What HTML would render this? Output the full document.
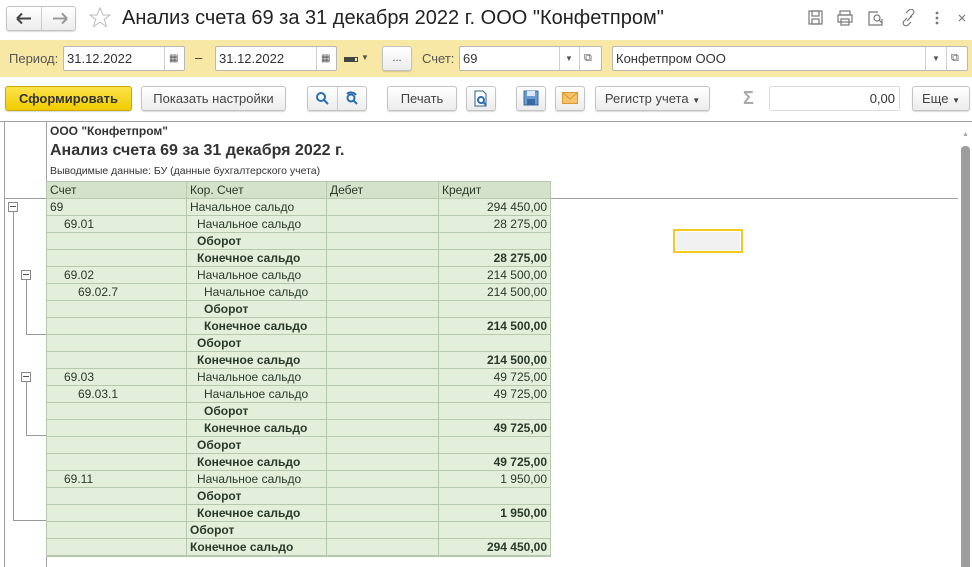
<!DOCTYPE html>
<html><head><meta charset="utf-8"><style>
*{box-sizing:border-box;margin:0;padding:0}
body{width:972px;height:567px;overflow:hidden;background:#fff;font-family:"Liberation Sans",Arial,sans-serif;position:relative;color:#333}
.a{position:absolute}
.btn{position:absolute;border:1px solid #c4c4c4;border-radius:3px;background:linear-gradient(#fff,#ececec);font-size:13px;color:#444;text-align:center;line-height:23px;height:25px;box-shadow:0 1px 1px rgba(0,0,0,.15)}
.inp{position:absolute;background:#fff;border:1px solid #b8b8b8;border-radius:2px;height:25px;font-size:13px;line-height:23px;padding-left:3px;color:#333}
.sep{position:absolute;top:0;bottom:0;width:1px;background:#d0d0d0}
.cell{position:absolute;height:17px;font-size:12px;line-height:17px;color:#2a3a2a;white-space:nowrap}
.b{font-weight:bold}
.r{text-align:right}
.tl{position:absolute;background:#999}
.box{position:absolute;width:10px;height:10px;border:1px solid #888;background:#fff}
.box:after{content:"";position:absolute;left:1px;right:1px;top:3px;height:1px;background:#555}
</style></head><body>
<div class="btn" style="left:6px;top:6px;width:70px;height:25px"></div>
<div class="a" style="left:41px;top:7px;width:1px;height:23px;background:#ccc"></div>
<svg class="a" style="left:15px;top:12px" width="56" height="13"><path d="M2 6.5h14M2 6.5l5-5M2 6.5l5 5" stroke="#444" stroke-width="2" fill="none"/><path d="M38 6.5h14M52 6.5l-5-5M52 6.5l-5 5" stroke="#999" stroke-width="2" fill="none"/></svg>
<svg class="a" style="left:89px;top:7px" width="22" height="22" viewBox="0 0 22 22"><path d="M11 1l3 7h7l-5.7 4.3 2.2 7.2L11 15.2 4.5 19.5l2.2-7.2L1 8h7z" fill="none" stroke="#bbb" stroke-width="1"/></svg>
<div class="a" style="left:122px;top:7px;font-size:20px;color:#222">Анализ счета 69 за 31 декабря 2022 г. ООО "Конфетпром"</div>
<svg class="a" style="left:808px;top:9px" width="160" height="18" viewBox="0 0 160 18" fill="none" stroke="#777" stroke-width="1.2">
<rect x="1" y="2" width="13" height="13"/><rect x="4" y="2" width="7" height="5"/><rect x="4" y="10" width="7" height="5"/>
<rect x="32" y="2" width="10" height="4"/><rect x="30" y="6" width="14" height="7"/><rect x="33" y="10" width="8" height="6"/>
<path d="M70 3h-9v13h13v-6"/><circle cx="69" cy="9" r="3"/><path d="M71 11l3 3"/>
<path d="M99 9l-3 3a2.5 2.5 0 0 0 4 4l3-3M102 8l3-3a2.5 2.5 0 0 0-4-4l-3 3M99 12l5-5"/>
<circle cx="129" cy="4" r=".8" fill="#777"/><circle cx="129" cy="9" r=".8" fill="#777"/><circle cx="129" cy="14" r=".8" fill="#777"/>
<path d="M151 6l6 6M157 6l-6 6"/></svg>
<div class="a" style="left:0;top:40px;width:972px;height:37px;background:#f8e8a6"></div>
<div class="a" style="left:9px;top:51px;font-size:13px;color:#555">Период:</div>
<div class="inp" style="left:63px;top:46px;width:122px">31.12.2022<div class="sep" style="left:100px"></div><span class="a" style="left:105px;top:0;font-size:10px;color:#555">▦</span></div>
<div class="a" style="left:195px;top:50px;font-size:13px">–</div>
<div class="inp" style="left:215px;top:46px;width:122px">31.12.2022<div class="sep" style="left:100px"></div><span class="a" style="left:105px;top:0;font-size:10px;color:#555">▦</span></div>
<div class="a" style="left:344px;top:57px;width:10px;height:5px;background:#444"></div><div class="a" style="left:354px;top:57px;width:4px;height:5px;border:1px solid #444"></div><div class="a" style="left:361px;top:53px;font-size:8px;color:#555">▼</div>
<div class="btn" style="left:382px;top:46px;width:30px;font-size:11px">...</div>
<div class="a" style="left:422px;top:51px;font-size:13px;color:#555">Счет:</div>
<div class="inp" style="left:459px;top:46px;width:143px">69<div class="sep" style="left:99px"></div><div class="sep" style="left:119px"></div><span class="a" style="left:105px;top:0;font-size:8px;color:#555">▼</span><span class="a" style="left:124px;top:0;font-size:11px;color:#555">⧉</span></div>
<div class="inp" style="left:612px;top:46px;width:356px">Конфетпром ООО<div class="sep" style="left:312px"></div><div class="sep" style="left:333px"></div><span class="a" style="left:319px;top:0;font-size:8px;color:#555">▼</span><span class="a" style="left:338px;top:0;font-size:11px;color:#555">⧉</span></div>
<div class="btn" style="left:5px;top:86px;width:127px;background:linear-gradient(#fbe34a,#f0cc00);border-color:#c9a800;font-weight:bold;color:#333">Сформировать</div>
<div class="btn" style="left:141px;top:86px;width:145px">Показать настройки</div>
<div class="btn" style="left:307px;top:86px;width:60px"></div><div class="a" style="left:337px;top:87px;width:1px;height:23px;background:#ccc"></div>
<svg class="a" style="left:314px;top:91px" width="48" height="16" fill="none" stroke="#2b6fb0" stroke-width="2"><circle cx="7" cy="6" r="4"/><path d="M10 9l4 4"/><circle cx="37" cy="7" r="3.5"/><path d="M40 10l3 3M33 3a6 6 0 0 1 9 1"/></svg>
<div class="btn" style="left:387px;top:86px;width:70px">Печать</div>
<div class="btn" style="left:466px;top:86px;width:30px"></div>
<svg class="a" style="left:473px;top:90px" width="16" height="17"><path d="M2 1h8l3 3v12H2z" fill="#fff" stroke="#2b5f90"/><circle cx="8" cy="10" r="3" fill="none" stroke="#2b6fb0" stroke-width="2"/><path d="M10 12l3 3" stroke="#2b6fb0" stroke-width="2"/></svg>
<div class="btn" style="left:516px;top:86px;width:30px"></div>
<svg class="a" style="left:523px;top:90px" width="16" height="16"><rect x="1" y="1" width="14" height="14" fill="#6b9bd1" stroke="#3a6aa0"/><rect x="4" y="1" width="8" height="5" fill="#dde9f7"/><rect x="4" y="9" width="8" height="6" fill="#3a6aa0"/></svg>
<div class="btn" style="left:555px;top:86px;width:30px"></div>
<svg class="a" style="left:562px;top:92px" width="16" height="12"><rect x=".5" y=".5" width="15" height="11" fill="#f3c26a" stroke="#d99a30"/><path d="M1 1l7 6 7-6" fill="none" stroke="#d99a30"/></svg>
<div class="btn" style="left:595px;top:86px;width:115px">Регистр учета <span style="font-size:8px">▼</span></div>
<div class="a" style="left:743px;top:88px;font-size:18px;color:#aaa;font-weight:bold">Σ</div>
<div class="inp" style="left:769px;top:86px;width:131px;text-align:right;padding-right:4px;border-color:#ddd">0,00</div>
<div class="btn" style="left:912px;top:86px;width:58px">Еще <span style="font-size:8px">▼</span></div>
<div class="a" style="left:0;top:121px;width:972px;height:1px;background:#a0a0a0"></div>
<div class="a" style="left:4px;top:122px;width:1px;height:445px;background:#a0a0a0"></div>
<div class="a" style="left:46px;top:122px;width:1px;height:445px;background:#a0a0a0"></div>
<div class="a" style="left:4px;top:198px;width:954px;height:1px;background:#a0a0a0"></div>
<div class="a" style="left:961px;top:146px;width:9px;height:421px;background:#9e9e9e;border-radius:4px 4px 0 0"></div>
<div class="a" style="left:962px;top:131px;font-size:7px;color:#aaa">▲</div>
<div class="a" style="left:673px;top:229px;width:70px;height:24px;border:2px solid #f5c81e;background:#f1f1f1;box-shadow:inset 0 0 0 1px #fff"></div>
<div class="a" style="left:50px;top:124px;font-size:12px;font-weight:bold;color:#333">ООО "Конфетпром"</div>
<div class="a" style="left:50px;top:142px;font-size:16px;font-weight:bold;color:#333">Анализ счета 69 за 31 декабря 2022 г.</div>
<div class="a" style="left:50px;top:165px;font-size:10.5px;color:#333">Выводимые данные: БУ (данные бухгалтерского учета)</div>
<div class="a" style="left:46px;top:181px;width:505px;height:18px;background:#d5e2cb;border:1px solid #b5c9ac"></div>
<div class="a" style="left:46px;top:199px;width:505px;height:358px;background:#e3eedb;border:1px solid #b5c9ac;border-top:none"></div>
<div id="grid"></div>
<div class="cell" style="left:50px;top:182px">Счет</div>
<div class="cell" style="left:190px;top:182px">Кор. Счет</div>
<div class="cell" style="left:330px;top:182px">Дебет</div>
<div class="cell" style="left:442px;top:182px">Кредит</div>
<div class="tl" style="left:13px;top:212px;width:1px;height:309px"></div><div class="tl" style="left:13px;top:520px;width:33px;height:1px"></div>
<div class="tl" style="left:26px;top:280px;width:1px;height:55px"></div><div class="tl" style="left:26px;top:334px;width:20px;height:1px"></div>
<div class="tl" style="left:26px;top:382px;width:1px;height:54px"></div><div class="tl" style="left:26px;top:435px;width:20px;height:1px"></div>
<div class="box" style="left:8px;top:202px"></div>
<div class="box" style="left:21px;top:270px"></div>
<div class="box" style="left:21px;top:372px"></div>
<script>
var rows=[["69",50,"Начальное сальдо",190,0,"294 450,00",0],
["69.01",64,"Начальное сальдо",197,0,"28 275,00",0],
["",0,"Оборот",197,1,"",0],
["",0,"Конечное сальдо",197,1,"28 275,00",1],
["69.02",64,"Начальное сальдо",197,0,"214 500,00",0],
["69.02.7",78,"Начальное сальдо",204,0,"214 500,00",0],
["",0,"Оборот",204,1,"",0],
["",0,"Конечное сальдо",204,1,"214 500,00",1],
["",0,"Оборот",197,1,"",0],
["",0,"Конечное сальдо",197,1,"214 500,00",1],
["69.03",64,"Начальное сальдо",197,0,"49 725,00",0],
["69.03.1",78,"Начальное сальдо",204,0,"49 725,00",0],
["",0,"Оборот",204,1,"",0],
["",0,"Конечное сальдо",204,1,"49 725,00",1],
["",0,"Оборот",197,1,"",0],
["",0,"Конечное сальдо",197,1,"49 725,00",1],
["69.11",64,"Начальное сальдо",197,0,"1 950,00",0],
["",0,"Оборот",197,1,"",0],
["",0,"Конечное сальдо",197,1,"1 950,00",1],
["",0,"Оборот",190,1,"",0],
["",0,"Конечное сальдо",190,1,"294 450,00",1]];
var h="";
[186,326,438].forEach(function(x){h+='<div class="a" style="left:'+x+'px;top:181px;width:1px;height:376px;background:#b5c9ac"></div>'});
rows.forEach(function(r,i){var y=199+i*17;
h+='<div class="a" style="left:46px;top:'+(y+16)+'px;width:505px;height:1px;background:#b5c9ac"></div>';
if(r[0])h+='<div class="cell" style="left:'+r[1]+'px;top:'+y+'px">'+r[0]+'</div>';
h+='<div class="cell'+(r[4]?' b':'')+'" style="left:'+r[3]+'px;top:'+y+'px">'+r[2]+'</div>';
if(r[5])h+='<div class="cell r'+(r[6]?' b':'')+'" style="left:440px;width:107px;top:'+y+'px">'+r[5]+'</div>';});
document.getElementById("grid").innerHTML=h;
</script>
</body></html>
